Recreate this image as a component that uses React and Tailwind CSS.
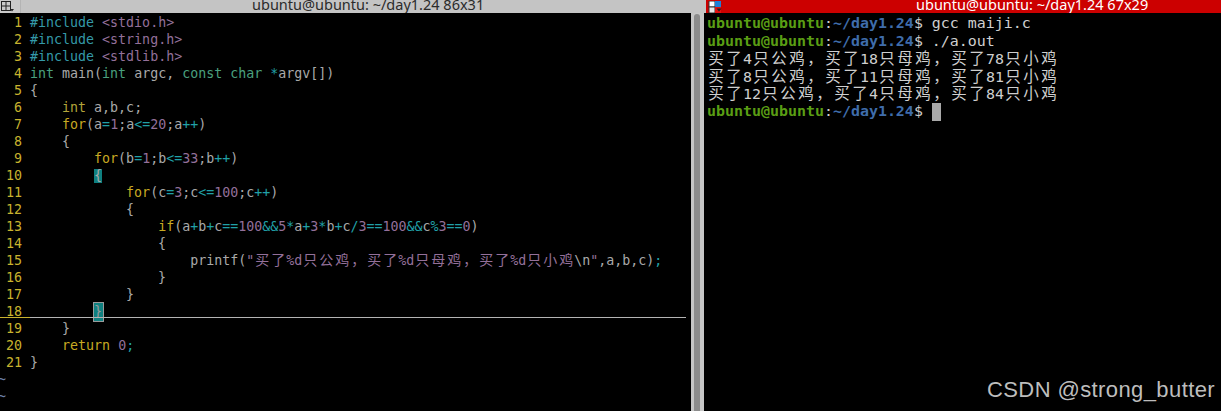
import React from "react";

const C = {
  D: "text-[#a9a9a9]",
  P: "text-[#3499a9]",
  S: "text-[#94709a]",
  T: "text-[#4aa07f]",
  Y: "text-[#c8aa22]",
  Y2: "text-[#b3a43a]",
  O: "text-[#21a0a8]",
  N: "text-[#a9a9a9]",
  G: "text-[#5a9e14] font-bold",
  B: "text-[#3f6dab] font-bold",
  W: "text-[#cfcfcf]",
};

const isCJK = (ch) => /[\u3000-\u9fff\uff00-\uffef]/.test(ch);

function Txt({ s, cls, wide }) {
  const parts = [];
  let buf = "";
  const flush = () => {
    if (buf) {
      parts.push(buf);
      buf = "";
    }
  };
  for (const ch of s) {
    if (isCJK(ch)) {
      flush();
      parts.push({ ch });
    } else buf += ch;
  }
  flush();
  return (
    <span className={cls}>
      {parts.map((p, i) =>
        typeof p === "string" ? (
          <span key={i}>{p}</span>
        ) : (
          <span
            key={i}
            className={
              wide
                ? "inline-block w-[18px] text-center font-['Noto_Sans_CJK_SC',sans-serif] text-[15.5px] leading-none"
                : "inline-block w-[16px] text-center font-['Noto_Sans_CJK_SC',sans-serif] text-[14px] leading-none"
            }
          >
            {p.ch}
          </span>
        )
      )}
    </span>
  );
}

const I = (n) => " ".repeat(n);

const code = [
  [["P", "#include"], ["D", " "], ["S", "<stdio.h>"]],
  [["P", "#include"], ["D", " "], ["S", "<string.h>"]],
  [["P", "#include"], ["D", " "], ["S", "<stdlib.h>"]],
  [["T", "int"], ["D", " main("], ["T", "int"], ["D", " argc, "], ["T", "const"], ["D", " "], ["T", "char"], ["D", " "], ["O", "*"], ["D", "argv[])"]],
  [["D", "{"]],
  [["D", I(4)], ["Y2", "int"], ["D", " a,b,c;"]],
  [["D", I(4)], ["Y", "for"], ["D", "(a"], ["O", "="], ["S", "1"], ["D", ";a"], ["O", "<="], ["S", "20"], ["D", ";a"], ["O", "++"], ["D", ")"]],
  [["D", I(4) + "{"]],
  [["D", I(8)], ["Y", "for"], ["D", "(b"], ["O", "="], ["S", "1"], ["D", ";b"], ["O", "<="], ["S", "33"], ["D", ";b"], ["O", "++"], ["D", ")"]],
  [["D", I(8)], ["HL", "{"]],
  [["D", I(12)], ["Y", "for"], ["D", "(c"], ["O", "="], ["S", "3"], ["D", ";c"], ["O", "<="], ["S", "100"], ["D", ";c"], ["O", "++"], ["D", ")"]],
  [["D", I(12) + "{"]],
  [
    ["D", I(16)], ["Y", "if"], ["D", "(a"], ["O", "+"], ["D", "b"], ["O", "+"], ["D", "c"], ["O", "=="], ["S", "100"], ["O", "&&"], ["S", "5"], ["O", "*"], ["D", "a"], ["O", "+"], ["S", "3"], ["O", "*"], ["D", "b"], ["O", "+"], ["D", "c"], ["O", "/"], ["S", "3"], ["O", "=="], ["S", "100"], ["O", "&&"], ["D", "c"], ["O", "%"], ["S", "3"], ["O", "=="], ["S", "0"], ["D", ")"],
  ],
  [["D", I(16) + "{"]],
  [["D", I(20) + "printf("], ["S", "\"买了%d只公鸡，买了%d只母鸡，买了%d只小鸡"], ["N", "\\n"], ["S", "\""], ["D", ",a,b,c)"], ["O", ";"]],
  [["D", I(16) + "}"]],
  [["D", I(12) + "}"]],
  [["D", I(8)], ["CUR", "}"]],
  [["D", I(4) + "}"]],
  [["D", I(4)], ["Y", "return"], ["D", " "], ["S", "0"], ["O", ";"]],
  [["D", "}"]],
];

function CodeLine({ n, toks }) {
  const cursorLine = n === 18;
  return (
    <div className="relative h-[17px] leading-[17px] whitespace-pre">
      <span className="text-[#c8b22e]">{String(n).padStart(3, " ") + " "}</span>
      {toks.map(([k, s], i) => {
        if (k === "HL")
          return (
            <span key={i} className="inline-block h-[14px] leading-[14px] bg-[#0f8080] text-[#a9a9a9]">
              {s}
            </span>
          );
        if (k === "CUR")
          return (
            <span key={i} className="relative inline-block h-[18px] leading-[17px] bg-[#0f8080] text-[#9a9a9a] outline outline-1 outline-[#9a9a9a] w-[9px] -mr-[1px]">
              {s}
            </span>
          );
        return <Txt key={i} s={s} cls={C[k]} />;
      })}
      {cursorLine && (
        <div className="absolute left-0 right-[5px] bottom-[2px] flex h-[1px]">
          <div className="w-[32px] bg-[#c8b22e]" />
          <div className="flex-1 bg-[#b4b4b4]" />
        </div>
      )}
    </div>
  );
}

function TitleIconLeft() {
  return (
    <svg width="14" height="12" viewBox="0 0 14 12" className="block">
      <rect x="1.5" y="0.5" width="9" height="9" fill="none" stroke="#222" strokeWidth="1" />
      <line x1="6" y1="0.5" x2="6" y2="9.5" stroke="#222" />
      <line x1="1.5" y1="5" x2="10.5" y2="5" stroke="#222" />
      <path d="M10 8 L14 8 L12 10.5 Z" fill="#222" />
    </svg>
  );
}

function TitleIconRight() {
  return (
    <svg width="15" height="12" viewBox="0 0 15 12" className="block">
      <rect x="1" y="0" width="6" height="6" fill="#ffffff" stroke="#333" strokeWidth="1" />
      <rect x="7" y="0" width="6" height="6" fill="#1f7fd6" />
      <rect x="1" y="6" width="6" height="6" fill="#e8e8e8" stroke="#333" strokeWidth="1" />
      <rect x="7" y="6" width="6" height="6" fill="#e01010" />
      <path d="M8.5 7.5 L13.5 7.5 L11 10.5 Z" fill="#222" />
    </svg>
  );
}

export default function App() {
  return (
    <div className="relative w-[1221px] h-[411px] overflow-hidden bg-black flex">
      {/* Left window */}
      <div className="w-[706px] shrink-0 flex flex-col">
        <div className="h-[13px] bg-[#c4c4c4] flex items-start overflow-hidden">
          <div className="w-[21px] h-[13px] bg-[#cacaca] border-r border-[#b4b4b4] pt-[1px]">
            <TitleIconLeft />
          </div>
          <div className="pl-[231px] -mt-[5px] text-[14.5px] leading-[18px] text-[#2b2b2b] font-['Noto_Sans',sans-serif] whitespace-nowrap">
            ubuntu@ubuntu: ~/day1.24 86x31
          </div>
        </div>
        <div className="flex flex-1 min-h-0">
          <div className="w-[693px] pt-[1px] overflow-hidden font-['DejaVu_Sans_Mono',monospace] text-[13.3px] -ml-[2px]">
            {code.map((toks, i) => (
              <CodeLine key={i} n={i + 1} toks={toks} />
            ))}
            <div className="h-[17px] leading-[17px] text-[#6a7fa8]">~</div>
            <div className="h-[17px] leading-[17px] text-[#6a7fa8]">~</div>
          </div>
          <div className="w-[13px] bg-[#c6c6c6] flex justify-center pt-[1px] pl-[1px] pr-[3px]">
            <div className="w-[6px] h-full bg-[#8c8c8c] rounded-t-[3px]" />
          </div>
        </div>
      </div>

      {/* Right window */}
      <div className="flex-1 flex flex-col min-w-0">
        <div className="h-[13px] bg-[#cc0000] flex items-start overflow-hidden">
          <div className="pl-[2px] pt-[1px]">
            <TitleIconRight />
          </div>
          <div className="pl-[193px] -mt-[5px] text-[14.5px] leading-[18px] text-white font-['Noto_Sans',sans-serif] whitespace-nowrap">
            ubuntu@ubuntu: ~/day1.24 67x29
          </div>
        </div>
        <div className="pl-[1px] pt-[2px] font-['DejaVu_Sans_Mono',monospace] text-[14.95px] whitespace-pre">
          <div className="h-[17.6px] leading-[17.6px]">
            <span className={C.G}>ubuntu@ubuntu</span>
            <span className={C.W}>:</span>
            <span className={C.B}>~/day1.24</span>
            <span className={C.W}>$ gcc maiji.c</span>
          </div>
          <div className="h-[17.6px] leading-[17.6px]">
            <span className={C.G}>ubuntu@ubuntu</span>
            <span className={C.W}>:</span>
            <span className={C.B}>~/day1.24</span>
            <span className={C.W}>$ ./a.out</span>
          </div>
          <div className="h-[17.6px] leading-[17.6px]">
            <Txt s="买了4只公鸡，买了18只母鸡，买了78只小鸡" cls={C.W} wide />
          </div>
          <div className="h-[17.6px] leading-[17.6px]">
            <Txt s="买了8只公鸡，买了11只母鸡，买了81只小鸡" cls={C.W} wide />
          </div>
          <div className="h-[17.6px] leading-[17.6px]">
            <Txt s="买了12只公鸡，买了4只母鸡，买了84只小鸡" cls={C.W} wide />
          </div>
          <div className="h-[17.6px] leading-[17.6px] flex items-center">
            <span className={C.G}>ubuntu@ubuntu</span>
            <span className={C.W}>:</span>
            <span className={C.B}>~/day1.24</span>
            <span className={C.W}>$ </span>
            <span className="inline-block w-[9px] h-[18px] bg-[#a9a9a9]" />
          </div>
        </div>
      </div>

      <div className="absolute left-[987px] top-[377px] text-[22px] leading-[26px] text-[#bdbdbd] font-['Liberation_Sans',sans-serif] tracking-[0.4px] whitespace-nowrap">
        CSDN @strong_butter
      </div>
    </div>
  );
}
